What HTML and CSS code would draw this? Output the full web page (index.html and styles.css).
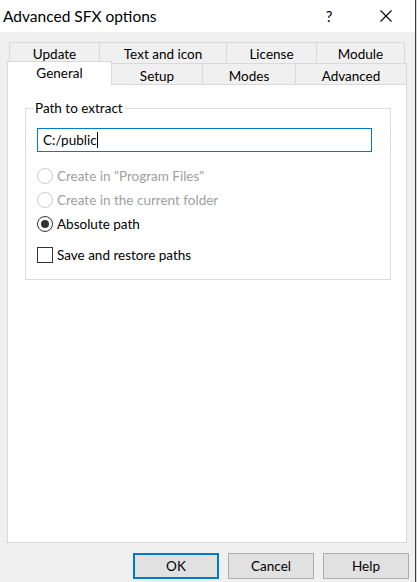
FILE: index.html
```html
<!DOCTYPE html>
<html>
<head>
<meta charset="utf-8">
<link rel="stylesheet" href="styles.css">
</head>
<body>
<div class="screen">
  <div class="window">
    <div class="titlebar">
      <span class="title">Advanced SFX options</span>
      <span class="tb-btn help">?</span>
      <span class="tb-btn close">
        <svg width="12" height="12" viewBox="0 0 12 12"><path d="M0.5 0.5 L11.5 11.5 M11.5 0.5 L0.5 11.5" stroke="#000" stroke-width="1.1" fill="none"/></svg>
      </span>
    </div>
    <div class="client">
      <div class="tabs">
        <div class="tabrow back">
          <div class="tab t-update">Update</div>
          <div class="tab t-text">Text and icon</div>
          <div class="tab t-license">License</div>
          <div class="tab t-module last">Module</div>
        </div>
        <div class="tabrow front">
          <div class="ftab sel">General</div>
          <div class="ftab t-setup">Setup</div>
          <div class="ftab t-modes">Modes</div>
          <div class="ftab t-adv">Advanced</div>
        </div>
      </div>
      <div class="panel">
        <div class="group">
          <span class="legend">Path to extract</span>
          <div class="input"><span class="value">C:/public</span><span class="caret"></span></div>
          <div class="options">
            <div class="opt disabled"><span class="radio"></span><span>Create in "Program Files"</span></div>
            <div class="opt disabled"><span class="radio"></span><span>Create in the current folder</span></div>
            <div class="opt"><span class="radio checked"></span><span>Absolute path</span></div>
            <div class="opt check-row"><span class="checkbox"></span><span>Save and restore paths</span></div>
          </div>
        </div>
      </div>
      <div class="buttons">
        <div class="btn default">OK</div>
        <div class="btn">Cancel</div>
        <div class="btn">Help</div>
      </div>
    </div>
  </div>
  <div class="edge"></div>
</div>
</body>
</html>
```
FILE: styles.css
```css
html, body {
  margin: 0;
  padding: 0;
  background: #f0f0f0;
}
body {
  font-family: Lato, "Noto Sans", sans-serif;
  font-size: 13.5px;
  color: #000;
}
.screen {
  display: flex;
  width: 417px;
  height: 582px;
}
.window {
  width: 415px;
  height: 582px;
  display: flex;
  flex-direction: column;
  background: #f0f0f0;
}
.edge {
  width: 1px;
  border-left: 1px solid #3c3c3c;
  background: #d8d8d8;
}
.titlebar {
  height: 32px;
  background: #fff;
  display: flex;
  align-items: center;
  flex-shrink: 0;
}
.title {
  padding-left: 3px;
  font-size: 15.5px;
  flex: 1;
}
.tb-btn {
  width: 46px;
  height: 32px;
  display: flex;
  align-items: center;
  justify-content: center;
}
.help {
  font-size: 15px;
  margin-right: 11px;
}
.close {
  margin-right: 6px;
}
.client {
  flex: 1;
  display: flex;
  flex-direction: column;
}
.tabs {
  margin-top: 10px;
}
.tabrow {
  display: flex;
  height: 21px;
}
.tabrow.back {
  margin-left: 9px;
}
.tab {
  box-sizing: border-box;
  height: 21px;
  border-top: 1px solid #d9d9d9;
  border-left: 1px solid #d9d9d9;
  display: flex;
  align-items: center;
  justify-content: center;
  padding-top: 1px;
}
.tab.last {
  border-right: 1px solid #d9d9d9;
}
.t-update { width: 90px; }
.t-text { width: 127px; }
.t-license { width: 90px; }
.t-module { width: 89px; }
.ftab {
  box-sizing: border-box;
  height: 21px;
  border-top: 1px solid #d9d9d9;
  border-right: 1px solid #d9d9d9;
  display: flex;
  align-items: center;
  justify-content: center;
  padding-top: 3px;
}
.ftab.sel {
  margin-left: 7px;
  width: 105px;
  height: 24px;
  margin-top: -2px;
  border-left: 1px solid #d9d9d9;
  background: #fff;
  position: relative;
  z-index: 2;
  padding-top: 0;
  padding-bottom: 2px;
}
.t-setup { width: 91px; }
.t-modes { width: 93px; }
.t-adv { width: 111px; }
.panel {
  box-sizing: border-box;
  margin-left: 7px;
  width: 400px;
  height: 459px;
  border: 1px solid #d9d9d9;
  background: #fff;
  position: relative;
  z-index: 1;
  flex-shrink: 0;
}
.group {
  box-sizing: border-box;
  margin: 23px 0 0 17px;
  width: 366px;
  height: 172px;
  border: 1px solid #dcdcdc;
  position: relative;
  padding: 19px 0 0 11px;
}
.legend {
  position: absolute;
  top: -10px;
  left: 7px;
  line-height: 18px;
  padding: 0 2px;
  background: #fff;
}
.input {
  box-sizing: border-box;
  width: 335px;
  height: 24px;
  border: 1px solid #0078d7;
  display: flex;
  align-items: center;
  padding-left: 5px;
}
.caret {
  display: inline-block;
  width: 1px;
  height: 16px;
  background: #000;
  margin-left: 0;
}
.options {
  margin-top: 12px;
}
.opt {
  height: 24px;
  display: flex;
  align-items: center;
  gap: 4px;
}
.opt.disabled {
  color: #a0a0a0;
}
.radio {
  box-sizing: border-box;
  width: 16px;
  height: 16px;
  border-radius: 50%;
  border: 1px solid #333;
  display: flex;
  align-items: center;
  justify-content: center;
  flex-shrink: 0;
}
.opt.disabled .radio {
  border-color: #cccccc;
}
.radio.checked::after {
  content: "";
  width: 8px;
  height: 8px;
  border-radius: 50%;
  background: #333;
}
.check-row {
  margin-top: 7px;
}
.checkbox {
  box-sizing: border-box;
  width: 16px;
  height: 16px;
  border: 1px solid #333;
  flex-shrink: 0;
}
.buttons {
  margin-top: 10px;
  display: flex;
  justify-content: flex-end;
  gap: 9px;
  padding-right: 6px;
}
.btn {
  box-sizing: border-box;
  width: 86px;
  height: 26px;
  background: #e1e1e1;
  border: 1px solid #adadad;
  display: flex;
  align-items: center;
  justify-content: center;
}
.btn.default {
  border: 2px solid #0078d7;
}
```
